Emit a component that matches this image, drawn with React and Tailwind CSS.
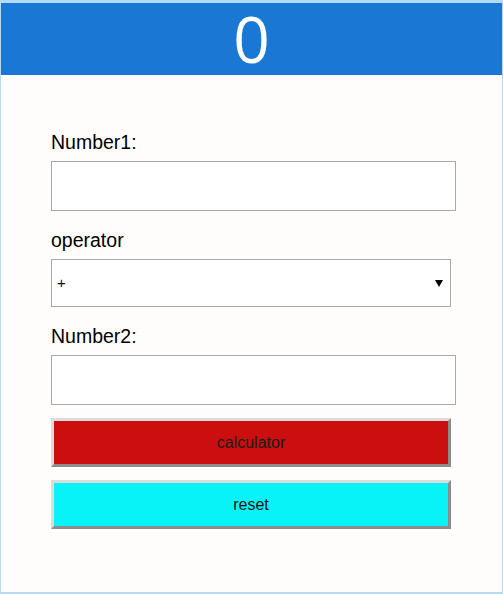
import { useState } from "react";

export default function App() {
  const [a, setA] = useState("");
  const [b, setB] = useState("");
  const [op, setOp] = useState("+");
  const [result, setResult] = useState(0);

  const calc = () => {
    const x = parseFloat(a) || 0;
    const y = parseFloat(b) || 0;
    if (op === "+") setResult(x + y);
    if (op === "-") setResult(x - y);
    if (op === "*") setResult(x * y);
    if (op === "/") setResult(y === 0 ? 0 : x / y);
  };

  const reset = () => {
    setA("");
    setB("");
    setOp("+");
    setResult(0);
  };

  return (
    <div className="w-[503px] h-[594px] bg-[#fefdfc] border-[#b5daf4] border-solid border-t-[3px] border-x border-b-2 font-['Liberation_Sans',Arial,sans-serif] text-black">
      {/* result header */}
      <div className="h-[72px] bg-[#1a77d3] text-center">
        <span className="font-['Open_Sans',sans-serif] text-[64px] leading-[72px] text-white">
          {result}
        </span>
      </div>

      {/* form */}
      <div className="pl-[50px] pt-[56px] flex flex-col">
        <label className="text-[19.5px] leading-[23px] mb-[7px]">Number1:</label>
        <input
          value={a}
          onChange={(e) => setA(e.target.value)}
          className="w-[405px] h-[50px] bg-white border border-solid border-[#a9a9a9] px-2 outline-none"
        />

        <label className="text-[19.5px] leading-[23px] mt-[18px] mb-[7px]">operator</label>
        <div className="relative w-[400px]">
          <select
            value={op}
            onChange={(e) => setOp(e.target.value)}
            className="appearance-none w-[400px] h-[48px] bg-white border border-solid border-[#a9a9a9] pl-[5px] text-[15px] text-[#0a0a2a] font-['Liberation_Sans',Arial,sans-serif] outline-none"
          >
            <option value="+">+</option>
            <option value="-">-</option>
            <option value="*">*</option>
            <option value="/">/</option>
          </select>
          <svg
            className="absolute left-[384px] top-[21px] pointer-events-none"
            width="8"
            height="7"
            viewBox="0 0 8 7"
          >
            <path d="M0 0H8L4 7Z" fill="#000" />
          </svg>
        </div>

        <label className="text-[19.5px] leading-[23px] mt-[18px] mb-[7px]">Number2:</label>
        <input
          value={b}
          onChange={(e) => setB(e.target.value)}
          className="w-[405px] h-[50px] bg-white border border-solid border-[#a9a9a9] px-2 outline-none"
        />

        <button
          onClick={calc}
          className="mt-[13px] w-[400px] h-[49px] bg-[#cb0e0e] text-[16px] text-[#1a1a1a] border-[3px] border-solid border-t-[#dcdcdc] border-l-[#dcdcdc] border-r-[#8c8c8c] border-b-[#8c8c8c]"
        >
          calculator
        </button>
        <button
          onClick={reset}
          className="mt-[13px] w-[400px] h-[49px] bg-[#07f3f7] text-[16px] text-[#111] border-[3px] border-solid border-t-[#dcdcdc] border-l-[#dcdcdc] border-r-[#8c8c8c] border-b-[#8c8c8c]"
        >
          reset
        </button>
      </div>
    </div>
  );
}
